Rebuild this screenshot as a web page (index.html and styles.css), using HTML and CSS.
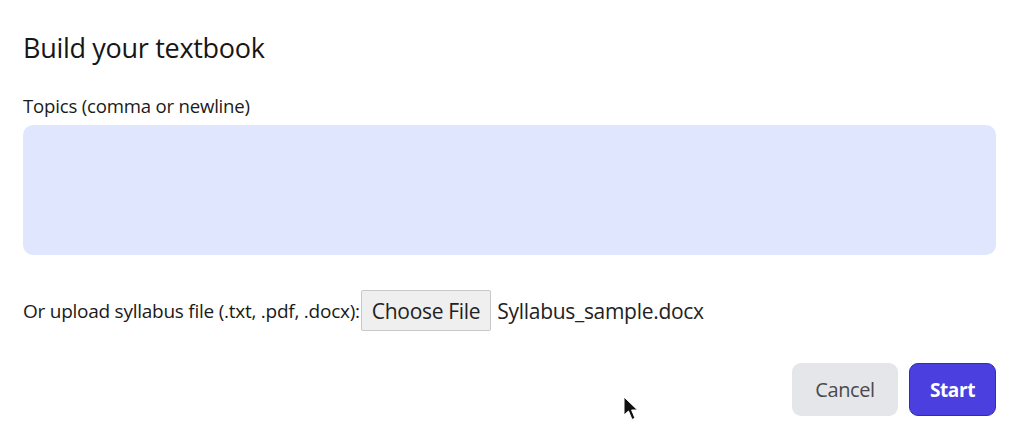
FILE: index.html
```html
<!DOCTYPE html>
<html>
<head>
<meta charset="utf-8">
<link rel="stylesheet" href="styles.css">
</head>
<body>
<div class="page">
  <h1 class="title">Build your textbook</h1>
  <label class="label">Topics (comma or newline)</label>
  <div class="textarea"></div>
  <div class="upload">
    <span class="upload-label">Or upload syllabus file (.txt, .pdf, .docx):</span>
    <span class="choose">Choose File</span>
    <span class="filename">Syllabus_sample.docx</span>
  </div>
  <div class="actions">
    <button class="btn cancel">Cancel</button>
    <button class="btn start">Start</button>
  </div>
</div>
<svg class="cursor" width="18" height="28" viewBox="0 0 18 28">
  <path d="M2 1 L2 19 L6.5 15 L10 23.5 L13 22.2 L9.6 14 L15.5 14 Z" fill="#111" stroke="#fff" stroke-width="1"/>
</svg>
</body>
</html>
```
FILE: styles.css
```css
html, body {
  margin: 0;
  padding: 0;
  background: #fff;
}
body {
  font-family: "Open Sans", "Noto Sans", sans-serif;
  color: #111;
  width: 1020px;
  height: 437px;
  overflow: hidden;
  position: relative;
}
.page {
  padding: 30px 24px 0 23px;
  display: flex;
  flex-direction: column;
}
.title {
  margin: 0;
  font-size: 27px;
  font-weight: 400;
  line-height: 36px;
  letter-spacing: -0.3px;
  color: #161616;
}
.label {
  margin-top: 30px;
  font-size: 18.6px;
  line-height: 20px;
  letter-spacing: -0.2px;
  color: #1a1a1a;
}
.textarea {
  margin-top: 9px;
  height: 130px;
  background: #e0e6fe;
  border-radius: 10px;
}
.upload {
  margin-top: 35px;
  display: flex;
  align-items: center;
  font-size: 19px;
  letter-spacing: -0.25px;
  height: 41px;
}
.upload-label {
  color: #1a1a1a;
}
.choose {
  margin-left: 1px;
  height: 41px;
  box-sizing: border-box;
  border: 1px solid #c8c8c8;
  background: #efefef;
  border-radius: 2px;
  padding: 0 10px;
  display: flex;
  align-items: center;
  font-size: 21px;
  letter-spacing: -0.3px;
  color: #222;
}
.filename {
  margin-left: 6px;
  font-size: 21px;
  letter-spacing: -0.3px;
  color: #222;
}
.actions {
  margin-top: 32px;
  display: flex;
  justify-content: flex-end;
  gap: 11px;
}
.btn {
  font-family: inherit;
  border: none;
  height: 53px;
  border-radius: 9px;
  font-size: 20px;
  letter-spacing: -0.4px;
  padding: 0;
}
.cancel {
  width: 106px;
  background: #e5e6ea;
  color: #4a4a4a;
}
.start {
  width: 87px;
  background: #4b3fe0;
  color: #fff;
  font-weight: 700;
  border: 1px solid #3429b8;
  font-size: 19px;
}
.cursor {
  position: absolute;
  left: 622px;
  top: 396px;
}
```
